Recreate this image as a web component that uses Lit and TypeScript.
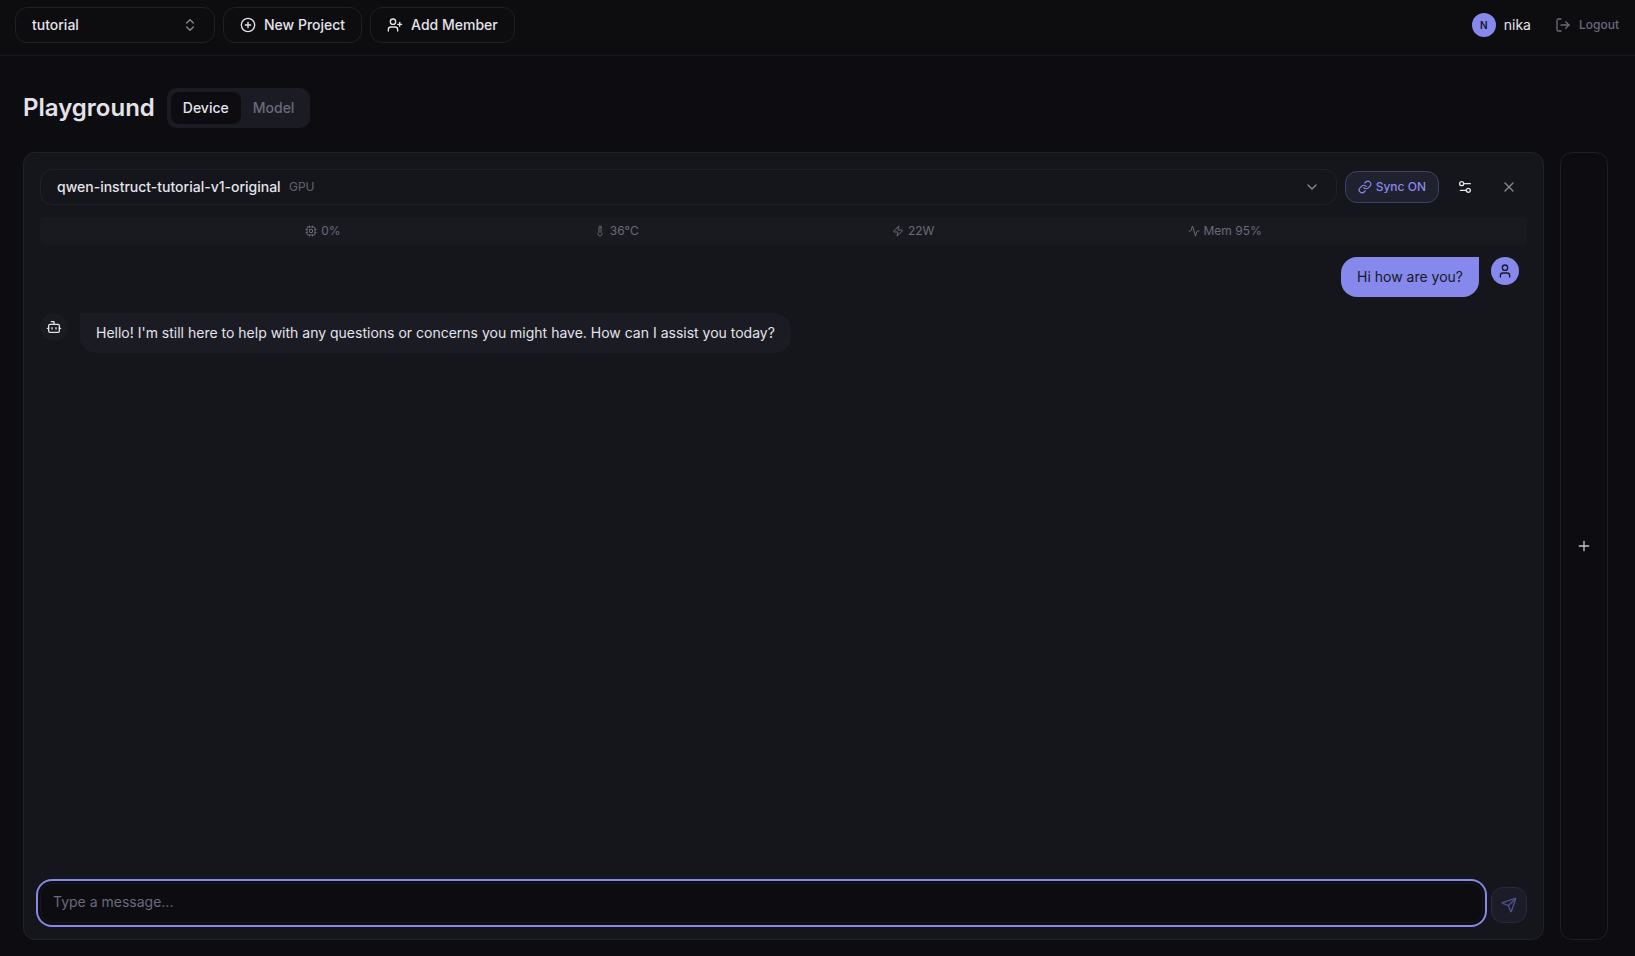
import { LitElement, html, css, svg } from "lit";
import { customElement, property, state } from "lit/decorators.js";
import { classMap } from "lit/directives/class-map.js";

const ICONS = {
  chevrons: svg`<path d="m7 15 5 5 5-5"/><path d="m7 9 5-5 5 5"/>`,
  chevron: svg`<path d="m6 9 6 6 6-6"/>`,
  circlePlus: svg`<circle cx="12" cy="12" r="10"/><path d="M8 12h8"/><path d="M12 8v8"/>`,
  userPlus: svg`<path d="M16 21v-2a4 4 0 0 0-4-4H6a4 4 0 0 0-4 4v2"/><circle cx="9" cy="7" r="4"/><path d="M19 8v6"/><path d="M22 11h-6"/>`,
  logout: svg`<path d="M9 21H5a2 2 0 0 1-2-2V5a2 2 0 0 1 2-2h4"/><path d="m16 17 5-5-5-5"/><path d="M21 12H9"/>`,
  link: svg`<path d="M10 13a5 5 0 0 0 7.54.54l3-3a5 5 0 0 0-7.07-7.07l-1.72 1.71"/><path d="M14 11a5 5 0 0 0-7.54-.54l-3 3a5 5 0 0 0 7.07 7.07l1.71-1.71"/>`,
  sliders: svg`<path d="M20 7h-9"/><path d="M14 17H5"/><circle cx="17" cy="17" r="3"/><circle cx="7" cy="7" r="3"/>`,
  close: svg`<path d="M18 6 6 18"/><path d="m6 6 12 12"/>`,
  cpu: svg`<rect x="4" y="4" width="16" height="16" rx="2"/><rect x="9" y="9" width="6" height="6" rx="1"/><path d="M15 2v2M15 20v2M2 15h2M2 9h2M20 15h2M20 9h2M9 2v2M9 20v2"/>`,
  thermometer: svg`<path d="M14 4v10.54a4 4 0 1 1-4 0V4a2 2 0 0 1 4 0Z"/>`,
  zap: svg`<path d="M4 14a1 1 0 0 1-.78-1.63l9.9-10.2a.5.5 0 0 1 .86.46l-1.92 6.02A1 1 0 0 0 13 10h7a1 1 0 0 1 .78 1.63l-9.9 10.2a.5.5 0 0 1-.86-.46l1.92-6.02A1 1 0 0 0 11 14z"/>`,
  activity: svg`<path d="M22 12h-2.48a2 2 0 0 0-1.93 1.46l-2.35 8.36a.25.25 0 0 1-.48 0L9.24 2.18a.25.25 0 0 0-.48 0l-2.35 8.36A2 2 0 0 1 4.49 12H2"/>`,
  bot: svg`<path d="M12 8V4H8"/><rect x="4" y="8" width="16" height="12" rx="2"/><path d="M2 14h2M20 14h2M15 13v2M9 13v2"/>`,
  user: svg`<path d="M19 21v-2a4 4 0 0 0-4-4H9a4 4 0 0 0-4 4v2"/><circle cx="12" cy="7" r="4"/>`,
  send: svg`<path d="M14.536 21.686a.5.5 0 0 0 .937-.024l6.5-19a.496.496 0 0 0-.635-.635l-19 6.5a.5.5 0 0 0-.024.937l7.93 3.18a2 2 0 0 1 1.112 1.11z"/><path d="m21.854 2.147-10.94 10.939"/>`,
  plus: svg`<path d="M5 12h14"/><path d="M12 5v14"/>`,
};

@customElement("ui-icon")
class UiIcon extends LitElement {
  @property() name: keyof typeof ICONS = "plus";

  static styles = css`
    :host {
      display: block;
      flex: none;
      width: 16px;
      height: 16px;
    }
    svg {
      display: block;
      width: 100%;
      height: 100%;
      fill: none;
      stroke: currentColor;
      stroke-width: 2;
      stroke-linecap: round;
      stroke-linejoin: round;
    }
  `;

  render() {
    return html`<svg viewBox="0 0 24 24" aria-hidden="true">${ICONS[this.name]}</svg>`;
  }
}

const shared = css`
  * {
    box-sizing: border-box;
  }
  button,
  select,
  textarea {
    margin: 0;
    padding: 0;
    border: 0;
    background: none;
    color: inherit;
    font: inherit;
  }
  button {
    display: flex;
    align-items: center;
    justify-content: center;
    white-space: nowrap;
    cursor: pointer;
  }
  select {
    appearance: none;
    outline: none;
  }
`;

@customElement("top-bar")
class TopBar extends LitElement {
  static styles = [
    shared,
    css`
      :host {
        display: block;
      }
      .bar {
        display: flex;
        align-items: center;
        gap: 8px;
        padding: 7px 16px 12px 15px;
        background: #0d0d0f;
        border-bottom: 1px solid #18181b;
        font-weight: 500;
      }
      .project,
      .action {
        display: flex;
        align-items: center;
        height: 36px;
        padding: 0 16px;
        border: 1px solid #202026;
        border-radius: 12px;
      }
      .project {
        width: 200px;
      }
      .project select {
        flex: 1;
      }
      .project ui-icon {
        color: #86868b;
      }
      .action {
        gap: 8px;
      }
      .account {
        display: flex;
        align-items: center;
        gap: 8px;
        margin-left: auto;
        font-weight: 400;
      }
      .initial {
        display: grid;
        place-items: center;
        width: 24px;
        height: 24px;
        border-radius: 50%;
        background: #8688ec;
        color: #17182a;
        font-size: 10px;
        font-weight: 600;
      }
      .logout {
        gap: 8px;
        margin-left: 16px;
        color: #6b697b;
        font-size: 12px;
        font-weight: 500;
      }
    `,
  ];

  render() {
    return html`
      <header class="bar">
        <div class="project">
          <select aria-label="Project">
            <option>tutorial</option>
          </select>
          <ui-icon name="chevrons"></ui-icon>
        </div>
        <button class="action"><ui-icon name="circlePlus"></ui-icon>New Project</button>
        <button class="action"><ui-icon name="userPlus"></ui-icon>Add Member</button>
        <div class="account">
          <span class="initial">N</span>
          <span>nika</span>
          <button class="logout"><ui-icon name="logout"></ui-icon>Logout</button>
        </div>
      </header>
    `;
  }
}

interface Message {
  role: "user" | "assistant";
  text: string;
}

@customElement("chat-panel")
class ChatPanel extends LitElement {
  @state() private sync = true;

  private stats: { icon: keyof typeof ICONS; label: string }[] = [
    { icon: "cpu", label: "0%" },
    { icon: "thermometer", label: "36°C" },
    { icon: "zap", label: "22W" },
    { icon: "activity", label: "Mem 95%" },
  ];

  private messages: Message[] = [
    { role: "user", text: "Hi how are you?" },
    {
      role: "assistant",
      text: "Hello! I'm still here to help with any questions or concerns you might have. How can I assist you today?",
    },
  ];

  static styles = [
    shared,
    css`
      :host {
        display: flex;
        flex-direction: column;
        gap: 12px;
        box-sizing: border-box;
        padding: 16px;
        background: #15161b;
        border: 1px solid #202226;
        border-radius: 12px;
      }
      .tools {
        display: flex;
        align-items: center;
        gap: 8px;
      }
      .model {
        display: flex;
        flex: 1;
        align-items: center;
        gap: 8px;
        height: 36px;
        padding: 0 16px;
        border: 1px solid #202227;
        border-radius: 12px;
        font-weight: 500;
      }
      .kind {
        flex: 1;
        color: #64626f;
        font-size: 12px;
        font-weight: 400;
      }
      .model ui-icon {
        color: #8a8a90;
      }
      .sync {
        gap: 4px;
        height: 32px;
        padding: 0 12px;
        border: 1px solid #403f6b;
        border-radius: 12px;
        background: #20212e;
        color: #8688ec;
        font-size: 12px;
        font-weight: 500;
      }
      .sync ui-icon {
        width: 14px;
        height: 14px;
      }
      .square {
        width: 36px;
        height: 36px;
        border-radius: 12px;
      }
      .close {
        color: #85868a;
      }
      .stats {
        display: flex;
        justify-content: space-evenly;
        margin: 0;
        padding: 6px 12px;
        list-style: none;
        border-radius: 4px;
        background: #191a1f;
        color: #6b697b;
        font-size: 12px;
        line-height: 16px;
      }
      .stat {
        display: flex;
        align-items: center;
        gap: 4px;
      }
      .stat ui-icon {
        width: 12px;
        height: 12px;
      }
      .log {
        display: flex;
        flex: 1;
        flex-direction: column;
        gap: 16px;
        padding-right: 8px;
      }
      .message {
        display: flex;
        align-items: flex-start;
        gap: 12px;
      }
      .user {
        flex-direction: row-reverse;
      }
      .avatar {
        display: grid;
        flex: none;
        place-items: center;
        width: 28px;
        height: 28px;
        border-radius: 50%;
        background: #1a1b20;
      }
      .bubble {
        margin: 0;
        padding: 10px 16px;
        border-radius: 0 16px 16px 16px;
        background: #1b1b23;
      }
      .user .avatar,
      .user .bubble {
        background: #8688ec;
        color: #17182a;
      }
      .user .bubble {
        border-radius: 16px 0 16px 16px;
      }
      .composer {
        display: flex;
        align-items: flex-end;
        gap: 8px;
      }
      .composer textarea {
        display: block;
        flex: 1;
        min-width: 0;
        height: 40px;
        padding: 8px 12px;
        border: 1px solid #18181c;
        border-radius: 12px;
        outline: none;
        resize: none;
        background: #0d0c11;
        box-shadow: 0 0 0 2px #0d0c11, 0 0 0 4px #8688ec;
      }
      .composer textarea::placeholder {
        color: #6b697b;
        opacity: 1;
      }
      .send {
        border: 1px solid #2a2940;
        background: #1b1c27;
        color: #504f8a;
      }
    `,
  ];

  render() {
    return html`
      <div class="tools">
        <div class="model">
          <select aria-label="Model">
            <option>qwen-instruct-tutorial-v1-original</option>
          </select>
          <span class="kind">GPU</span>
          <ui-icon name="chevron"></ui-icon>
        </div>
        <button class="sync" aria-pressed=${this.sync} @click=${() => (this.sync = !this.sync)}>
          <ui-icon name="link"></ui-icon>Sync ${this.sync ? "ON" : "OFF"}
        </button>
        <button class="square" aria-label="Settings"><ui-icon name="sliders"></ui-icon></button>
        <button class="square close" aria-label="Close"><ui-icon name="close"></ui-icon></button>
      </div>
      <ul class="stats">
        ${this.stats.map(
          (s) => html`<li class="stat"><ui-icon name=${s.icon}></ui-icon>${s.label}</li>`
        )}
      </ul>
      <div class="log">
        ${this.messages.map(
          (m) => html`
            <div class=${classMap({ message: true, user: m.role === "user" })}>
              <span class="avatar"><ui-icon name=${m.role === "user" ? "user" : "bot"}></ui-icon></span>
              <p class="bubble">${m.text}</p>
            </div>
          `
        )}
      </div>
      <form class="composer" @submit=${(e: Event) => e.preventDefault()}>
        <textarea rows="1" aria-label="Message" placeholder="Type a message..."></textarea>
        <button class="square send" aria-label="Send"><ui-icon name="send"></ui-icon></button>
      </form>
    `;
  }
}

@customElement("app-root")
class AppRoot extends LitElement {
  @state() private mode = "Device";

  static styles = [
    shared,
    css`
      :host {
        display: flex;
        flex-direction: column;
        min-height: 100vh;
        background: #0d0c11;
        color: #e4e3ea;
        font: 400 14px/20px Inter, sans-serif;
      }
      main {
        display: flex;
        flex: 1;
        flex-direction: column;
        gap: 24px;
        padding: 32px 27px 16px 23px;
      }
      .heading {
        display: flex;
        align-items: center;
        gap: 12px;
      }
      h1 {
        margin: 0;
        font-size: 24px;
        font-weight: 600;
        line-height: 32px;
      }
      .modes {
        display: flex;
        padding: 4px;
        border-radius: 10px;
        background: #1b1b23;
      }
      .mode {
        height: 32px;
        padding: 0 12px;
        border-radius: 8px;
        color: #6b697b;
        font-weight: 500;
      }
      .active {
        background: #0d0c11;
        color: #e4e3ea;
      }
      .workspace {
        display: flex;
        flex: 1;
        gap: 16px;
      }
      chat-panel {
        flex: 1;
      }
      .add {
        width: 48px;
        border: 1px solid #1f1f24;
        border-radius: 12px;
        color: #c4c3c9;
      }
    `,
  ];

  render() {
    return html`
      <top-bar></top-bar>
      <main>
        <div class="heading">
          <h1>Playground</h1>
          <div class="modes">
            ${["Device", "Model"].map(
              (m) => html`<button
                class=${classMap({ mode: true, active: m === this.mode })}
                aria-pressed=${m === this.mode}
                @click=${() => (this.mode = m)}
              >${m}</button>`
            )}
          </div>
        </div>
        <div class="workspace">
          <chat-panel></chat-panel>
          <button class="add" aria-label="Add panel"><ui-icon name="plus"></ui-icon></button>
        </div>
      </main>
    `;
  }
}
